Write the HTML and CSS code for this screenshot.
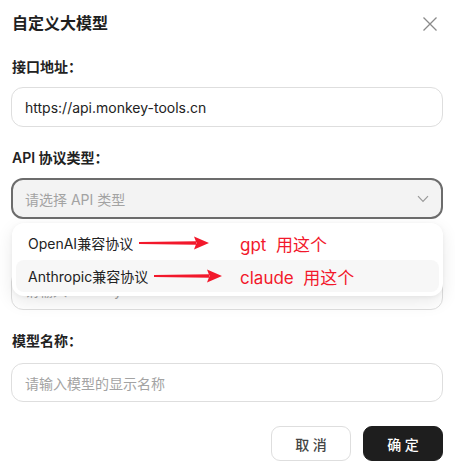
FILE: index.html
```html
<!DOCTYPE html>
<html lang="zh-CN">
<head>
<meta charset="utf-8">
<title>自定义大模型</title>
<link rel="stylesheet" href="styles.css">
</head>
<body>
<div class="dialog">
  <div class="header">
    <h1 class="title">自定义大模型</h1>
    <svg class="close" width="16" height="16" viewBox="0 0 16 16"><path d="M1.5 1.5L14.5 14.5M14.5 1.5L1.5 14.5" stroke="#8a8a8a" stroke-width="1.3" fill="none"/></svg>
  </div>

  <div class="field">
    <div class="label">接口地址：</div>
    <div class="input"><span class="value">https://api.monkey-tools.cn</span></div>
  </div>

  <div class="field">
    <div class="label">API 协议类型：</div>
    <div class="select-wrap">
      <div class="input select">
        <span class="placeholder">请选择 API 类型</span>
        <svg class="chevron" width="12" height="8" viewBox="0 0 12 8"><path d="M1 1.2L6 6.5L11 1.2" stroke="#9a9a9a" stroke-width="1.2" fill="none"/></svg>
      </div>
      <div class="menu">
        <div class="item">
          <span class="item-text">OpenAI兼容协议</span>
          <svg class="arrow" width="70" height="14" viewBox="0 0 70 14"><polygon points="0,6.1 57,5.3 57,8.7 0,7.9" fill="#f2182b"/><polygon points="55,0.6 70,7 55,13.4 57.5,7" fill="#f2182b"/></svg>
          <span class="note">gpt&nbsp; 用这个</span>
        </div>
        <div class="item hover">
          <span class="item-text">Anthropic兼容协议</span>
          <svg class="arrow" width="68" height="14" viewBox="0 0 68 14"><polygon points="0,6.1 55,5.3 55,8.7 0,7.9" fill="#f2182b"/><polygon points="53,0.6 68,7 53,13.4 55.5,7" fill="#f2182b"/></svg>
          <span class="note">claude&nbsp; 用这个</span>
        </div>
      </div>
    </div>
  </div>

  <div class="field">
    <div class="label"></div>
    <div class="input">
      <span class="placeholder">请输入 API Key</span>
      <svg class="eye" width="14" height="14" viewBox="0 0 14 14"><path d="M1 7C3 3.5 11 3.5 13 7C11 10.5 3 10.5 1 7Z" stroke="#999" stroke-width="1.1" fill="none"/><path d="M2 12L12 2" stroke="#999" stroke-width="1.1"/></svg>
    </div>
  </div>

  <div class="field last">
    <div class="label">模型名称：</div>
    <div class="input"><span class="placeholder">请输入模型的显示名称</span></div>
  </div>

  <div class="footer">
    <button class="btn btn-cancel">取 消</button>
    <button class="btn btn-ok">确 定</button>
  </div>
</div>
</body>
</html>
```

FILE: styles.css
```css
* { box-sizing: border-box; }
html, body { margin: 0; padding: 0; background: #ffffff; }
body {
  font-family: Inter, "Noto Sans CJK SC", sans-serif;
  color: #222;
  width: 455px;
  height: 475px;
  overflow: hidden;
}
.dialog {
  padding: 13px 12px 0 11px;
  display: flex;
  flex-direction: column;
}
.header {
  display: flex;
  justify-content: space-between;
  align-items: center;
  height: 20px;
  margin-bottom: 24px;
}
.title {
  margin: 0 0 0 1px;
  font-size: 16px;
  font-weight: 600;
  line-height: 20px;
  color: #1f1f1f;
}
.close { margin-right: 5px; margin-top: 2px; }
.field {
  display: flex;
  flex-direction: column;
  margin-bottom: 21px;
}
.label {
  font-size: 14px;
  font-weight: 600;
  line-height: 20px;
  height: 20px;
  margin: 0 0 10px 1px;
  color: #222;
}
.input {
  height: 40px;
  width: 432px;
  border: 1px solid #dedede;
  border-radius: 12px;
  background: #fff;
  display: flex;
  align-items: center;
  justify-content: space-between;
  padding: 0 12px 0 13px;
  font-size: 14px;
}
.value { color: #222; }
.placeholder { color: #a3a3a3; }
.select-wrap { position: relative; }
.select {
  height: 41px;
  border: 2px solid #6c6c6c;
  background: #f3f3f3;
  padding: 0 12px 0 12px;
}
.chevron { margin-top: 1px; }
.menu {
  position: absolute;
  left: 1px;
  top: 45px;
  width: 431px;
  background: #fff;
  border-radius: 12px;
  box-shadow: 0 6px 18px rgba(0, 0, 0, 0.09), 0 1px 4px rgba(0, 0, 0, 0.05);
  padding: 4px;
  z-index: 2;
}
.item {
  position: relative;
  height: 32.5px;
  display: flex;
  align-items: center;
  padding-left: 12px;
  border-radius: 8px;
  font-size: 14px;
  color: #222;
}
.item.hover { background: #f7f7f7; }
.arrow { margin-left: 6px; }
.note {
  position: absolute;
  left: 224px;
  top: 50%;
  transform: translateY(-50%);
  color: #f2182b;
  font-size: 17px;
  white-space: pre;
}
.eye { opacity: 0.8; }
.field.last { margin-bottom: 24px; }
.field.last .label { margin-bottom: 12px; }
.field.last .input { height: 39px; }
.footer {
  display: flex;
  justify-content: flex-end;
  gap: 12px;
}
.btn {
  width: 80px;
  height: 35px;
  border-radius: 9px;
  font-family: Inter, "Noto Sans CJK SC", sans-serif;
  font-size: 14px;
  font-weight: 500;
  cursor: pointer;
}
.btn-cancel {
  background: #fff;
  border: 1px solid #dedede;
  color: #444;
}
.btn-ok {
  background: #1e1e1e;
  border: 1px solid #1e1e1e;
  color: #fff;
}
```
